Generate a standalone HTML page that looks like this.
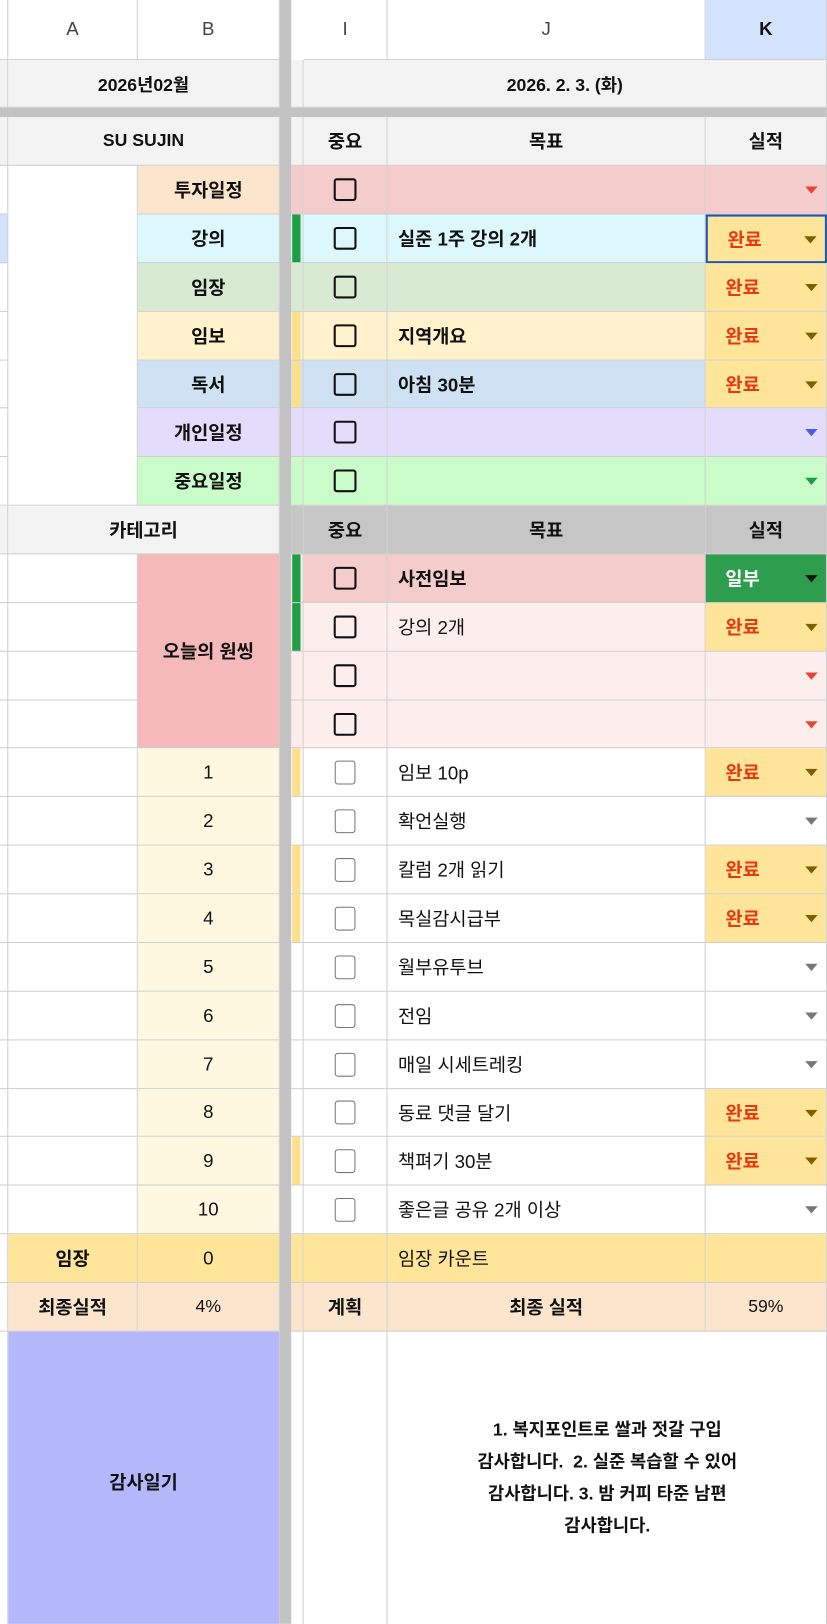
<!DOCTYPE html>
<html><head><meta charset="utf-8"><style>
*{margin:0;padding:0;box-sizing:border-box}
html,body{width:827px;height:1624px;overflow:hidden}
body{position:relative;background:#fff;font-family:"Liberation Sans","Noto Sans CJK KR","NanumGothic",sans-serif;font-size:18px;color:#111}
#w{position:absolute;left:0;top:0;width:798px;height:1567px;overflow:hidden;transform:scale(1.0363);transform-origin:0 0}
.c{position:absolute;border-right:1px solid #cfcfcf;border-bottom:1px solid #cfcfcf;display:flex;align-items:center;justify-content:center;white-space:nowrap}
.b{font-weight:bold}
.l{justify-content:flex-start;padding-left:10px}
.cb{width:22px;height:22px;border:2.5px solid #111;border-radius:3px;background:transparent}
.cg{width:20px;height:23px;border:1.5px solid #777;border-radius:3px}
.t{position:absolute;right:8px;top:50%;margin-top:-3px;width:0;height:0;border-left:6px solid transparent;border-right:6px solid transparent;border-top:7px solid #777}
.done{color:#e8380d;font-weight:bold;justify-content:flex-start;padding-left:19px;background:#ffe599}
</style></head><body><div id="w">

<div class="c" style="left:0;top:0;width:8px;height:58px"></div>
<div class="c" style="left:8px;top:0;width:125px;height:58px;color:#444">A</div>
<div class="c" style="left:133px;top:0;width:137px;height:58px;color:#444">B</div>
<div class="c" style="left:293px;top:0;width:81px;height:58px;color:#444">I</div>
<div class="c" style="left:374px;top:0;width:307px;height:58px;color:#444">J</div>
<div class="c b" style="left:681px;top:0;width:117px;height:58px;background:#d3e3fd">K</div>

<div class="c" style="left:0;top:58px;width:8px;height:46px;background:#f3f3f3"></div>
<div class="c b" style="left:8px;top:58px;width:262px;height:46px;background:#f3f3f3;font-size:17px">2026년02월</div>
<div class="c" style="left:281px;top:58px;width:12px;height:46px;background:#f3f3f3"></div>
<div class="c b" style="left:293px;top:58px;width:505px;height:46px;background:#f3f3f3;font-size:17px">2026. 2. 3. (화)</div>
<div style="position:absolute;left:0;top:104px;width:798px;height:9px;background:#c3c3c3"></div>

<div class="c" style="left:0;top:113px;width:8px;height:47px;background:#f3f3f3"></div>
<div class="c b" style="left:8px;top:113px;width:262px;height:47px;background:#f3f3f3;font-size:17px">SU SUJIN</div>
<div class="c" style="left:281px;top:113px;width:12px;height:47px;background:#f3f3f3"></div>
<div class="c b" style="left:293px;top:113px;width:81px;height:47px;background:#f3f3f3">중요</div>
<div class="c b" style="left:374px;top:113px;width:307px;height:47px;background:#f3f3f3">목표</div>
<div class="c b" style="left:681px;top:113px;width:117px;height:47px;background:#f3f3f3">실적</div>

<div class="c" style="left:8px;top:160px;width:125px;height:328px"></div>

<div class="c" style="left:0;top:160px;width:8px;height:47px"></div>
<div class="c b" style="left:133px;top:160px;width:137px;height:47px;background:#fce5cd">투자일정</div>
<div class="c" style="left:281px;top:160px;width:12px;height:47px;background:#f4cccc"></div>
<div class="c" style="left:293px;top:160px;width:81px;height:47px;background:#f4cccc"><div class="cb"></div></div>
<div class="c" style="left:374px;top:160px;width:307px;height:47px;background:#f4cccc"></div>
<div class="c" style="left:681px;top:160px;width:117px;height:47px;background:#f4cccc"><div class="t" style="border-top-color:#ea4335"></div></div>

<div class="c" style="left:0;top:207px;width:8px;height:47px;background:#d3e3fd"></div>
<div class="c b" style="left:133px;top:207px;width:137px;height:47px;background:#dcf8fc">강의</div>
<div class="c" style="left:281px;top:207px;width:12px;height:47px;background:#dcf8fc"><div style="position:absolute;left:1px;top:0;width:8px;height:46px;background:#1e9e45"></div></div>
<div class="c" style="left:293px;top:207px;width:81px;height:47px;background:#dcf8fc"><div class="cb"></div></div>
<div class="c b l" style="left:374px;top:207px;width:307px;height:47px;background:#dcf8fc">실준 1주 강의 2개</div>
<div class="c done" style="left:681px;top:207px;width:117px;height:47px;border:2px solid #1a56b8">완료<div class="t" style="border-top-color:#7f6000"></div></div>

<div class="c" style="left:0;top:254px;width:8px;height:47px"></div>
<div class="c b" style="left:133px;top:254px;width:137px;height:47px;background:#d9ead3">임장</div>
<div class="c" style="left:281px;top:254px;width:12px;height:47px;background:#d9ead3"></div>
<div class="c" style="left:293px;top:254px;width:81px;height:47px;background:#d9ead3"><div class="cb"></div></div>
<div class="c" style="left:374px;top:254px;width:307px;height:47px;background:#d9ead3"></div>
<div class="c done" style="left:681px;top:254px;width:117px;height:47px">완료<div class="t" style="border-top-color:#7f6000"></div></div>

<div class="c" style="left:0;top:301px;width:8px;height:47px"></div>
<div class="c b" style="left:133px;top:301px;width:137px;height:47px;background:#fff2cc">임보</div>
<div class="c" style="left:281px;top:301px;width:12px;height:47px;background:#fff2cc"><div style="position:absolute;left:1px;top:0;width:8px;height:46px;background:#ffe08a"></div></div>
<div class="c" style="left:293px;top:301px;width:81px;height:47px;background:#fff2cc"><div class="cb"></div></div>
<div class="c b l" style="left:374px;top:301px;width:307px;height:47px;background:#fff2cc">지역개요</div>
<div class="c done" style="left:681px;top:301px;width:117px;height:47px">완료<div class="t" style="border-top-color:#7f6000"></div></div>

<div class="c" style="left:0;top:348px;width:8px;height:46px"></div>
<div class="c b" style="left:133px;top:348px;width:137px;height:46px;background:#cfe2f3">독서</div>
<div class="c" style="left:281px;top:348px;width:12px;height:46px;background:#cfe2f3"><div style="position:absolute;left:1px;top:0;width:8px;height:45px;background:#ffe08a"></div></div>
<div class="c" style="left:293px;top:348px;width:81px;height:46px;background:#cfe2f3"><div class="cb"></div></div>
<div class="c b l" style="left:374px;top:348px;width:307px;height:46px;background:#cfe2f3">아침 30분</div>
<div class="c done" style="left:681px;top:348px;width:117px;height:46px">완료<div class="t" style="border-top-color:#7f6000"></div></div>

<div class="c" style="left:0;top:394px;width:8px;height:47px"></div>
<div class="c b" style="left:133px;top:394px;width:137px;height:47px;background:#e3dcfb">개인일정</div>
<div class="c" style="left:281px;top:394px;width:12px;height:47px;background:#e3dcfb"></div>
<div class="c" style="left:293px;top:394px;width:81px;height:47px;background:#e3dcfb"><div class="cb"></div></div>
<div class="c" style="left:374px;top:394px;width:307px;height:47px;background:#e3dcfb"></div>
<div class="c" style="left:681px;top:394px;width:117px;height:47px;background:#e3dcfb"><div class="t" style="border-top-color:#4a5ee8"></div></div>

<div class="c" style="left:0;top:441px;width:8px;height:47px"></div>
<div class="c b" style="left:133px;top:441px;width:137px;height:47px;background:#c9fcc9">중요일정</div>
<div class="c" style="left:281px;top:441px;width:12px;height:47px;background:#c9fcc9"></div>
<div class="c" style="left:293px;top:441px;width:81px;height:47px;background:#c9fcc9"><div class="cb"></div></div>
<div class="c" style="left:374px;top:441px;width:307px;height:47px;background:#c9fcc9"></div>
<div class="c" style="left:681px;top:441px;width:117px;height:47px;background:#c9fcc9"><div class="t" style="border-top-color:#1e9e45"></div></div>

<div class="c" style="left:0;top:488px;width:8px;height:47px;background:#f3f3f3"></div>
<div class="c b" style="left:8px;top:488px;width:262px;height:47px;background:#f3f3f3">카테고리</div>
<div class="c" style="left:281px;top:488px;width:12px;height:47px;background:#c6c6c6"></div>
<div class="c b" style="left:293px;top:488px;width:81px;height:47px;background:#c6c6c6">중요</div>
<div class="c b" style="left:374px;top:488px;width:307px;height:47px;background:#c6c6c6">목표</div>
<div class="c b" style="left:681px;top:488px;width:117px;height:47px;background:#c6c6c6">실적</div>

<div class="c" style="left:0;top:535px;width:8px;height:47px"></div>
<div class="c" style="left:0;top:582px;width:8px;height:47px"></div>
<div class="c" style="left:0;top:629px;width:8px;height:47px"></div>
<div class="c" style="left:0;top:676px;width:8px;height:46px"></div>
<div class="c" style="left:8px;top:535px;width:125px;height:47px"></div>
<div class="c" style="left:8px;top:582px;width:125px;height:47px"></div>
<div class="c" style="left:8px;top:629px;width:125px;height:47px"></div>
<div class="c" style="left:8px;top:676px;width:125px;height:46px"></div>
<div class="c b" style="left:133px;top:535px;width:137px;height:187px;background:#f6b9b9">오늘의 원씽</div>

<div class="c" style="left:281px;top:535px;width:12px;height:47px;background:#fdeeee"><div style="position:absolute;left:1px;top:0;width:8px;height:46px;background:#1e9e45"></div></div>
<div class="c" style="left:293px;top:535px;width:81px;height:47px;background:#f4cccc"><div class="cb"></div></div>
<div class="c b l" style="left:374px;top:535px;width:307px;height:47px;background:#f4cccc">사전임보</div>
<div class="c b" style="left:681px;top:535px;width:117px;height:47px;background:#2e9e4e;color:#fff;justify-content:flex-start;padding-left:19px">일부<div class="t" style="border-top-color:#111"></div></div>

<div class="c" style="left:281px;top:582px;width:12px;height:47px;background:#fdeeee"><div style="position:absolute;left:1px;top:0;width:8px;height:46px;background:#1e9e45"></div></div>
<div class="c" style="left:293px;top:582px;width:81px;height:47px;background:#fdeeee"><div class="cb"></div></div>
<div class="c l" style="left:374px;top:582px;width:307px;height:47px;background:#fdeeee">강의 2개</div>
<div class="c done" style="left:681px;top:582px;width:117px;height:47px">완료<div class="t" style="border-top-color:#7f6000"></div></div>

<div class="c" style="left:281px;top:629px;width:12px;height:47px;background:#fdeeee"></div>
<div class="c" style="left:293px;top:629px;width:81px;height:47px;background:#fdeeee"><div class="cb"></div></div>
<div class="c" style="left:374px;top:629px;width:307px;height:47px;background:#fdeeee"></div>
<div class="c" style="left:681px;top:629px;width:117px;height:47px;background:#fdeeee"><div class="t" style="border-top-color:#ea4335"></div></div>

<div class="c" style="left:281px;top:676px;width:12px;height:46px;background:#fdeeee"></div>
<div class="c" style="left:293px;top:676px;width:81px;height:46px;background:#fdeeee"><div class="cb"></div></div>
<div class="c" style="left:374px;top:676px;width:307px;height:46px;background:#fdeeee"></div>
<div class="c" style="left:681px;top:676px;width:117px;height:46px;background:#fdeeee"><div class="t" style="border-top-color:#ea4335"></div></div>

<div class="c" style="left:0;top:722px;width:8px;height:47px"></div><div class="c" style="left:8px;top:722px;width:125px;height:47px"></div>
<div class="c" style="left:133px;top:722px;width:137px;height:47px;background:#fff8e1">1</div>
<div class="c" style="left:281px;top:722px;width:12px;height:47px"><div style="position:absolute;left:1px;top:0;width:8px;height:46px;background:#ffe08a"></div></div>
<div class="c" style="left:293px;top:722px;width:81px;height:47px"><div class="cg"></div></div>
<div class="c l" style="left:374px;top:722px;width:307px;height:47px">임보 10p</div>
<div class="c done" style="left:681px;top:722px;width:117px;height:47px">완료<div class="t" style="border-top-color:#7f6000"></div></div>

<div class="c" style="left:0;top:769px;width:8px;height:47px"></div><div class="c" style="left:8px;top:769px;width:125px;height:47px"></div>
<div class="c" style="left:133px;top:769px;width:137px;height:47px;background:#fff8e1">2</div>
<div class="c" style="left:281px;top:769px;width:12px;height:47px"></div>
<div class="c" style="left:293px;top:769px;width:81px;height:47px"><div class="cg"></div></div>
<div class="c l" style="left:374px;top:769px;width:307px;height:47px">확언실행</div>
<div class="c" style="left:681px;top:769px;width:117px;height:47px"><div class="t"></div></div>

<div class="c" style="left:0;top:816px;width:8px;height:47px"></div><div class="c" style="left:8px;top:816px;width:125px;height:47px"></div>
<div class="c" style="left:133px;top:816px;width:137px;height:47px;background:#fff8e1">3</div>
<div class="c" style="left:281px;top:816px;width:12px;height:47px"><div style="position:absolute;left:1px;top:0;width:8px;height:46px;background:#ffe08a"></div></div>
<div class="c" style="left:293px;top:816px;width:81px;height:47px"><div class="cg"></div></div>
<div class="c l" style="left:374px;top:816px;width:307px;height:47px">칼럼 2개 읽기</div>
<div class="c done" style="left:681px;top:816px;width:117px;height:47px">완료<div class="t" style="border-top-color:#7f6000"></div></div>

<div class="c" style="left:0;top:863px;width:8px;height:47px"></div><div class="c" style="left:8px;top:863px;width:125px;height:47px"></div>
<div class="c" style="left:133px;top:863px;width:137px;height:47px;background:#fff8e1">4</div>
<div class="c" style="left:281px;top:863px;width:12px;height:47px"><div style="position:absolute;left:1px;top:0;width:8px;height:46px;background:#ffe08a"></div></div>
<div class="c" style="left:293px;top:863px;width:81px;height:47px"><div class="cg"></div></div>
<div class="c l" style="left:374px;top:863px;width:307px;height:47px">목실감시급부</div>
<div class="c done" style="left:681px;top:863px;width:117px;height:47px">완료<div class="t" style="border-top-color:#7f6000"></div></div>

<div class="c" style="left:0;top:910px;width:8px;height:47px"></div><div class="c" style="left:8px;top:910px;width:125px;height:47px"></div>
<div class="c" style="left:133px;top:910px;width:137px;height:47px;background:#fff8e1">5</div>
<div class="c" style="left:281px;top:910px;width:12px;height:47px"></div>
<div class="c" style="left:293px;top:910px;width:81px;height:47px"><div class="cg"></div></div>
<div class="c l" style="left:374px;top:910px;width:307px;height:47px">월부유투브</div>
<div class="c" style="left:681px;top:910px;width:117px;height:47px"><div class="t"></div></div>

<div class="c" style="left:0;top:957px;width:8px;height:47px"></div><div class="c" style="left:8px;top:957px;width:125px;height:47px"></div>
<div class="c" style="left:133px;top:957px;width:137px;height:47px;background:#fff8e1">6</div>
<div class="c" style="left:281px;top:957px;width:12px;height:47px"></div>
<div class="c" style="left:293px;top:957px;width:81px;height:47px"><div class="cg"></div></div>
<div class="c l" style="left:374px;top:957px;width:307px;height:47px">전임</div>
<div class="c" style="left:681px;top:957px;width:117px;height:47px"><div class="t"></div></div>

<div class="c" style="left:0;top:1004px;width:8px;height:47px"></div><div class="c" style="left:8px;top:1004px;width:125px;height:47px"></div>
<div class="c" style="left:133px;top:1004px;width:137px;height:47px;background:#fff8e1">7</div>
<div class="c" style="left:281px;top:1004px;width:12px;height:47px"></div>
<div class="c" style="left:293px;top:1004px;width:81px;height:47px"><div class="cg"></div></div>
<div class="c l" style="left:374px;top:1004px;width:307px;height:47px">매일 시세트레킹</div>
<div class="c" style="left:681px;top:1004px;width:117px;height:47px"><div class="t"></div></div>

<div class="c" style="left:0;top:1051px;width:8px;height:46px"></div><div class="c" style="left:8px;top:1051px;width:125px;height:46px"></div>
<div class="c" style="left:133px;top:1051px;width:137px;height:46px;background:#fff8e1">8</div>
<div class="c" style="left:281px;top:1051px;width:12px;height:46px"></div>
<div class="c" style="left:293px;top:1051px;width:81px;height:46px"><div class="cg"></div></div>
<div class="c l" style="left:374px;top:1051px;width:307px;height:46px">동료 댓글 달기</div>
<div class="c done" style="left:681px;top:1051px;width:117px;height:46px">완료<div class="t" style="border-top-color:#7f6000"></div></div>

<div class="c" style="left:0;top:1097px;width:8px;height:47px"></div><div class="c" style="left:8px;top:1097px;width:125px;height:47px"></div>
<div class="c" style="left:133px;top:1097px;width:137px;height:47px;background:#fff8e1">9</div>
<div class="c" style="left:281px;top:1097px;width:12px;height:47px"><div style="position:absolute;left:1px;top:0;width:8px;height:46px;background:#ffe08a"></div></div>
<div class="c" style="left:293px;top:1097px;width:81px;height:47px"><div class="cg"></div></div>
<div class="c l" style="left:374px;top:1097px;width:307px;height:47px">책펴기 30분</div>
<div class="c done" style="left:681px;top:1097px;width:117px;height:47px">완료<div class="t" style="border-top-color:#7f6000"></div></div>

<div class="c" style="left:0;top:1144px;width:8px;height:47px"></div><div class="c" style="left:8px;top:1144px;width:125px;height:47px"></div>
<div class="c" style="left:133px;top:1144px;width:137px;height:47px;background:#fff8e1">10</div>
<div class="c" style="left:281px;top:1144px;width:12px;height:47px"></div>
<div class="c" style="left:293px;top:1144px;width:81px;height:47px"><div class="cg"></div></div>
<div class="c l" style="left:374px;top:1144px;width:307px;height:47px">좋은글 공유 2개 이상</div>
<div class="c" style="left:681px;top:1144px;width:117px;height:47px"><div class="t"></div></div>

<div class="c" style="left:0;top:1191px;width:8px;height:47px"></div>
<div class="c b" style="left:8px;top:1191px;width:125px;height:47px;background:#ffe599">임장</div>
<div class="c" style="left:133px;top:1191px;width:137px;height:47px;background:#ffe599">0</div>
<div class="c" style="left:281px;top:1191px;width:12px;height:47px;background:#ffe599"></div>
<div class="c" style="left:293px;top:1191px;width:81px;height:47px;background:#ffe599"></div>
<div class="c l" style="left:374px;top:1191px;width:307px;height:47px;background:#ffe599">임장 카운트</div>
<div class="c" style="left:681px;top:1191px;width:117px;height:47px;background:#ffe599"></div>

<div class="c" style="left:0;top:1238px;width:8px;height:47px"></div>
<div class="c b" style="left:8px;top:1238px;width:125px;height:47px;background:#fce5cd">최종실적</div>
<div class="c" style="left:133px;top:1238px;width:137px;height:47px;background:#fce5cd;font-size:17px">4%</div>
<div class="c" style="left:281px;top:1238px;width:12px;height:47px;background:#fce5cd"></div>
<div class="c b" style="left:293px;top:1238px;width:81px;height:47px;background:#fce5cd">계획</div>
<div class="c b" style="left:374px;top:1238px;width:307px;height:47px;background:#fce5cd">최종 실적</div>
<div class="c" style="left:681px;top:1238px;width:117px;height:47px;background:#fce5cd;font-size:17px">59%</div>

<div class="c" style="left:0;top:1285px;width:8px;height:290px"></div>
<div class="c b" style="left:8px;top:1285px;width:262px;height:290px;background:#b4b7fa">감사일기</div>
<div class="c" style="left:281px;top:1285px;width:12px;height:290px"></div>
<div class="c" style="left:293px;top:1285px;width:81px;height:290px"></div>
<div class="c" style="left:374px;top:1285px;width:424px;height:290px"></div>
<div class="b" style="position:absolute;left:404px;top:1285px;width:364px;height:282px;display:flex;align-items:center;justify-content:center;text-align:center;line-height:31px;font-size:17px">1. 복지포인트로 쌀과 젓갈 구입<br>감사합니다.&nbsp; 2. 실준 복습할 수 있어<br>감사합니다. 3. 밤 커피 타준 남편<br>감사합니다.</div>

<div style="position:absolute;left:270px;top:0;width:11px;height:1567px;background:#c3c3c3"></div>
</div></body></html>
